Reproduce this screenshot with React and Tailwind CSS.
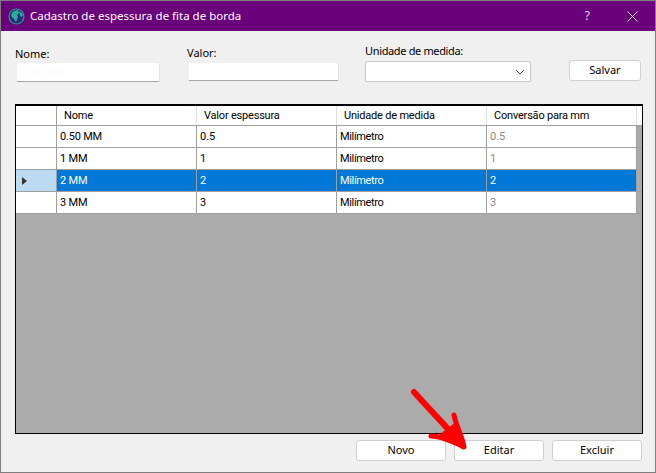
import React from 'react';

const font = { fontFamily: '"Noto Sans", "Liberation Sans", Arial, sans-serif' };
const gridFont = { fontFamily: 'Roboto, "Liberation Sans", Arial, sans-serif' };

const columns = [
  { label: 'Nome', width: 'w-[140px]' },
  { label: 'Valor espessura', width: 'w-[140px]' },
  { label: 'Unidade de medida', width: 'w-[150px]' },
  { label: 'Conversão para mm', width: 'w-[150px]' },
];

const rows = [
  { nome: '0.50 MM', valor: '0.5', conv: '0.5' },
  { nome: '1 MM', valor: '1', conv: '1' },
  { nome: '2 MM', valor: '2', conv: '2', selected: true },
  { nome: '3 MM', valor: '3', conv: '3' },
];

const Globe = () => (
  <svg width="17" height="17" viewBox="0 0 17 17" className="shrink-0">
    <circle cx="8.5" cy="8.5" r="7.5" fill="#2c2a78" stroke="#1f9c8f" strokeWidth="1.2" />
    <path d="M6 3l4-1 1 3-2 2 1 2-2 5-2-3-3-3 1-3z" fill="#25b09c" />
    <path d="M11 3l3 2 1 3-2 1-1-2z" fill="#25b09c" />
  </svg>
);

const Button = ({ children, className = '' }) => (
  <button className={`h-[21px] bg-white border border-[#d0d0d0] rounded-[3px] text-[11px] text-black ${className}`}>
    {children}
  </button>
);

const GridRow = ({ row }) => {
  const sel = row.selected;
  const cell = `h-full flex items-center pl-[3px] pt-[1px] border-r border-[#a0a0a0] ${sel ? 'bg-[#0078d7]' : 'bg-white'}`;
  const text = sel ? 'text-white' : 'text-black';
  return (
    <div className="flex h-[22px] border-b border-[#a0a0a0]">
      <div className={`w-[41px] h-full flex items-center pl-[6px] border-r border-[#a0a0a0] ${sel ? 'bg-[#bcdaf2]' : 'bg-white'}`}>
        {sel && <div className="w-0 h-0 border-y-[4px] border-y-transparent border-l-[5px] border-l-[#333]" />}
      </div>
      <div className={`${cell} ${text} w-[140px] tracking-[-0.2px]`}>{row.nome}</div>
      <div className={`${cell} ${text} w-[140px]`}>{row.valor}</div>
      <div className={`${cell} ${text} w-[150px] tracking-[-0.35px]`}>Milímetro</div>
      <div className={`${cell} w-[150px] ${sel ? 'text-white' : 'text-[#8a8a8a]'}`}>{row.conv}</div>
    </div>
  );
};

export default function App() {
  return (
    <div style={font} className="relative w-[656px] h-[473px] bg-[#f0f0f0] border border-[#7f7f7f] flex flex-col overflow-hidden text-[11px] text-black">
      <div className="h-[30px] bg-[#6a007a] flex items-center pl-[7px] text-white shrink-0">
        <Globe />
        <span className="ml-[5px] text-[11.5px]">Cadastro de espessura de fita de borda</span>
        <span className="ml-auto text-[12px] text-[#e8d8ec]">?</span>
        <svg width="11" height="11" viewBox="0 0 11 11" className="ml-[37px] mr-[17px]">
          <path d="M0.5 0.5l10 10M10.5 0.5l-10 10" stroke="#e8d8ec" strokeWidth="1" fill="none" />
        </svg>
      </div>

      <div className="flex items-start h-[73px] shrink-0">
        <div className="ml-[14px] mt-[16px] flex flex-col">
          <span className="leading-[14px]">Nome:</span>
          <div className="ml-[2px] mt-[2px] w-[142px] h-[19px] bg-white border-b border-[#a8a8a8] shadow-[1px_0_0_#e4e4e4] pl-[2px] text-[#fbfbfb] leading-[18px]">0.50 MM</div>
        </div>
        <div className="ml-[28px] mt-[15px] flex flex-col">
          <span className="leading-[14px]">Valor:</span>
          <div className="ml-[2px] mt-[3px] w-[149px] h-[18px] bg-white border-b border-[#a8a8a8] shadow-[1px_0_0_#e4e4e4]" />
        </div>
        <div className="ml-[27px] mt-[13px] flex flex-col">
          <span className="leading-[14px] tracking-[-0.35px]">Unidade de medida:</span>
          <div className="mt-[3px] w-[166px] h-[21px] bg-white border border-[#c8c8c8] rounded-[2px] flex items-center justify-end pr-[5px]">
            <svg width="10" height="6" viewBox="0 0 10 6">
              <path d="M1 1l4 4 4-4" stroke="#606060" strokeWidth="1" fill="none" />
            </svg>
          </div>
        </div>
        <Button className="ml-[38px] mt-[29px] w-[72px]">Salvar</Button>
      </div>

      <div style={gridFont} className="ml-[14px] w-[628px] h-[330px] border border-black border-t-2 bg-[#ababab] shrink-0 text-[11px]">
        <div className="flex h-[20px] bg-white border-b border-[#a0a0a0] tracking-[-0.2px]">
          <div className="w-[41px] border-r border-[#a0a0a0]" />
          {columns.map((c) => (
            <div key={c.label} className={`${c.width} flex items-center pl-[7px] pt-[1px] border-r border-[#e0e0e0]`}>{c.label}</div>
          ))}
        </div>
        {rows.map((r) => (
          <GridRow key={r.nome} row={r} />
        ))}
      </div>

      <div className="flex justify-end gap-[8px] mt-[6px] mr-[13px]">
        <Button className="w-[90px]">Novo</Button>
        <Button className="w-[90px]">Editar</Button>
        <Button className="w-[90px]">Excluir</Button>
      </div>

      {/* annotation arrow */}
      <svg width="70" height="70" viewBox="0 0 70 70" className="absolute left-[405px] top-[385px]" fill="none">
        <path d="M8 6C24 24 42 42 57 60" stroke="#ff0000" strokeWidth="6" strokeLinecap="round" />
        <path d="M25 50C36 50 48 56 58 61C56 50 50 40 48 29" stroke="#ff0000" strokeWidth="5" strokeLinecap="round" strokeLinejoin="round" />
        <path d="M30 51L57 60L50 36z" fill="#ff0000" />
      </svg>
    </div>
  );
}
